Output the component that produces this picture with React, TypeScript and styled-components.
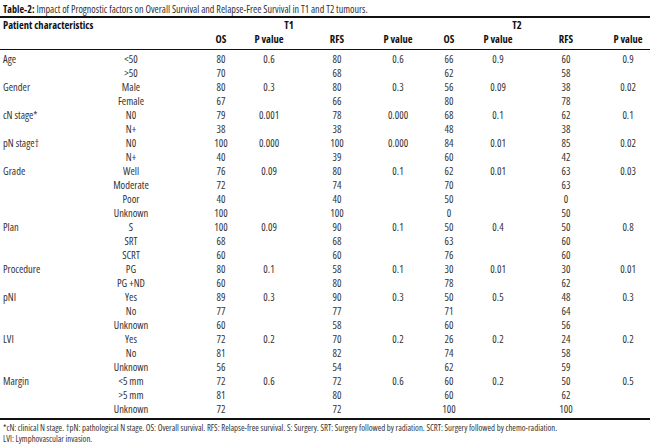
import React from 'react';
import styled, { createGlobalStyle } from 'styled-components';

const GlobalStyle = createGlobalStyle`
    html, body {
        margin: 0;
        padding: 0;
        background: #ffffff;
    }
    body {
        font-family: "Open Sans", "Liberation Sans", sans-serif;
        font-stretch: 75%;
        color: #2b2b2b;
    }
`;

const COLS = '71px 120px 60px 36px 100px 22px 80px 18px 118px 6px 1fr';

const Page = styled.div`
    width: 650px;
    height: 447px;
    padding-top: 3px;
    box-sizing: border-box;
    overflow: hidden;
`;

const Title = styled.div`
    font-size: 10.1px;
    line-height: 12px;
    height: 13px;
    padding-left: 3px;
    color: #333;
    white-space: nowrap;

    b {
        font-weight: 700;
        color: #111;
    }
`;

const Table = styled.div`
    border-top: 2px solid #111;
    border-bottom: 2px solid #111;
`;

const Head = styled.div`
    border-bottom: 1px solid #111;
    padding-bottom: 3px;
`;

const Body = styled.div`
    padding-top: 2px;
    padding-bottom: 2px;
`;

const Row = styled.div<{ $h: number }>`
    display: grid;
    grid-template-columns: ${COLS};
    height: ${(p) => p.$h}px;
    align-items: center;
    font-size: 10.5px;
`;

const Cell = styled.div<{ $bold?: boolean; $span?: string }>`
    display: flex;
    justify-content: center;
    white-space: nowrap;
    font-weight: ${(p) => (p.$bold ? 700 : 400)};
    color: ${(p) => (p.$bold ? '#111' : '#333')};
    grid-column: ${(p) => p.$span ?? 'auto'};
`;

const CharCell = styled(Cell)`
    justify-content: flex-start;
    padding-left: 3px;
`;

const Notes = styled.div`
    padding: 3px 0 0 3px;
    font-size: 8.7px;
    line-height: 11px;
    color: #333;
    white-space: nowrap;
`;

type Line = [string, string, ...string[]];

const data: Line[] = [
    ['Age', '<50', '80', '0.6', '80', '0.6', '66', '0.9', '60', '0.9'],
    ['', '>50', '70', '', '68', '', '62', '', '58', ''],
    ['Gender', 'Male', '80', '0.3', '80', '0.3', '56', '0.09', '38', '0.02'],
    ['', 'Female', '67', '', '66', '', '80', '', '78', ''],
    ['cN stage*', 'N0', '79', '0.001', '78', '0.000', '68', '0.1', '62', '0.1'],
    ['', 'N+', '38', '', '38', '', '48', '', '38', ''],
    ['pN stage†', 'N0', '100', '0.000', '100', '0.000', '84', '0.01', '85', '0.02'],
    ['', 'N+', '40', '', '39', '', '60', '', '42', ''],
    ['Grade', 'Well', '76', '0.09', '80', '0.1', '62', '0.01', '63', '0.03'],
    ['', 'Moderate', '72', '', '74', '', '70', '', '63', ''],
    ['', 'Poor', '40', '', '40', '', '50', '', '0', ''],
    ['', 'Unknown', '100', '', '100', '', '0', '', '50', ''],
    ['Plan', 'S', '100', '0.09', '90', '0.1', '50', '0.4', '50', '0.8'],
    ['', 'SRT', '68', '', '68', '', '63', '', '60', ''],
    ['', 'SCRT', '60', '', '60', '', '76', '', '60', ''],
    ['Procedure', 'PG', '80', '0.1', '58', '0.1', '30', '0.01', '30', '0.01'],
    ['', 'PG +ND', '60', '', '80', '', '78', '', '62', ''],
    ['pNI', 'Yes', '89', '0.3', '90', '0.3', '50', '0.5', '48', '0.3'],
    ['', 'No', '77', '', '77', '', '71', '', '64', ''],
    ['', 'Unknown', '60', '', '58', '', '60', '', '56', ''],
    ['LVI', 'Yes', '72', '0.2', '70', '0.2', '26', '0.2', '24', '0.2'],
    ['', 'No', '81', '', '82', '', '74', '', '58', ''],
    ['', 'Unknown', '56', '', '54', '', '62', '', '59', ''],
    ['Margin', '<5 mm', '72', '0.6', '72', '0.6', '60', '0.2', '50', '0.5'],
    ['', '>5 mm', '81', '', '80', '', '60', '', '62', ''],
    ['', 'Unknown', '72', '', '72', '', '100', '', '100', ''],
];

const subHeads = ['OS', 'P value', 'RFS', 'P value', 'OS', 'P value', 'RFS', 'P value'];

export default function App() {
    return (
        <Page>
            <GlobalStyle />
            <Title>
                <b>Table-2:</b> Impact of Prognostic factors on Overall Survival and
                Relapse-Free Survival in T1 and T2 tumours.
            </Title>
            <Table>
                <Head>
                    <Row $h={14}>
                        <CharCell $bold $span="1 / 3">
                            Patient characteristics
                        </CharCell>
                        <Cell $bold $span="3 / 6">
                            T1
                        </Cell>
                        <Cell $bold $span="7 / 10">
                            T2
                        </Cell>
                    </Row>
                    <Row $h={14}>
                        <CharCell />
                        <Cell />
                        {subHeads.map((h, i) => (
                            <Cell key={i} $bold>
                                {h}
                            </Cell>
                        ))}
                    </Row>
                </Head>
                <Body>
                    {data.map((line, r) => (
                        <Row key={r} $h={14}>
                            <CharCell>{line[0]}</CharCell>
                            {line.slice(1).map((v, i) => (
                                <Cell key={i}>{v}</Cell>
                            ))}
                        </Row>
                    ))}
                </Body>
            </Table>
            <Notes>
                <div>
                    *cN: clinical N stage. †pN: pathological N stage. OS: Overall survival.
                    RFS: Relapse-free survival. S: Surgery. SRT: Surgery followed by
                    radiation. SCRT: Surgery followed by chemo-radiation.
                </div>
                <div>LVI: Lymphovascular invasion.</div>
            </Notes>
        </Page>
    );
}
